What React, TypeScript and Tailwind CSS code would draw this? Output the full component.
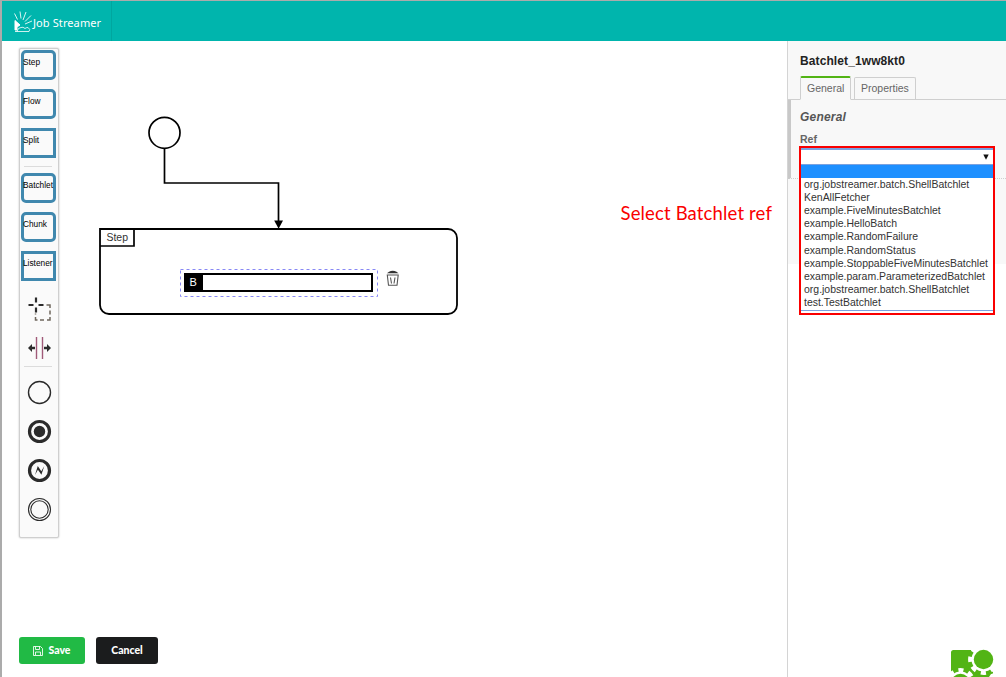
import React from "react";

const refs = [
  "org.jobstreamer.batch.ShellBatchlet",
  "KenAllFetcher",
  "example.FiveMinutesBatchlet",
  "example.HelloBatch",
  "example.RandomFailure",
  "example.RandomStatus",
  "example.StoppableFiveMinutesBatchlet",
  "example.param.ParameterizedBatchlet",
  "org.jobstreamer.batch.ShellBatchlet",
  "test.TestBatchlet",
];

function Entry({ label, square }: { label: string; square?: boolean }) {
  return (
    <div className="h-[39px] pt-px pl-px">
      <div
        className={
          "h-[30px] w-[35px] border-[3px] border-[#4088ae] pt-[3px] font-['Liberation_Sans',sans-serif] text-[8.300px] leading-[12px] whitespace-nowrap text-black " +
          (square ? "rounded-none" : "rounded-[5px]")
        }
      >
        <span className="-ml-px block">{label}</span>
      </div>
    </div>
  );
}

function Tool({ children }: { children: React.ReactNode }) {
  return (
    <svg className="block" width="39" height="39" viewBox="0 0 39 39" fill="none" stroke="#2b2b2b">
      {children}
    </svg>
  );
}

function Divider() {
  return <div className="mr-[6px] mb-[5px] ml-[4px] h-px bg-[#dcdcdc]" />;
}

function Palette() {
  return (
    <div className="mt-[7px] ml-[17px] h-[490px] w-[40px] rounded-[2px] border border-[#cfcfcf] bg-[#fafafa] shadow-[0_0_2px_0_#bbb]">
      <Entry label="Step" />
      <Entry label="Flow" />
      <Entry label="Split" square />
      <Divider />
      <Entry label="Batchlet" />
      <Entry label="Chunk" />
      <Entry label="Listener" square />
      <Tool>
        <path d="M16 8.500v5M16 18.500v5M8.500 16h5M18.500 16h5" strokeWidth="2.200" />
        <path d="M26.500 16h3.500v3M30 21.500v4M30 28v3h-3M24 31h-4M17.500 31h-2v-3M15.500 25.500v-1" stroke="#6f675d" strokeWidth="1.500" />
      </Tool>
      <Tool>
        <path d="M16.500 9v22" stroke="#a05a78" strokeWidth="1.400" />
        <path d="M22.500 9v22" stroke="#a05a78" strokeWidth="1.400" />
        <path d="M8 20l4-4v2.700h3v2.600h-3v2.700zM31 20l-4-4v2.700h-3v2.600h3v2.700z" fill="#2b2b2b" stroke="none" />
      </Tool>
      <div className="-mt-px"><Divider /></div>
      <Tool><circle cx="19.500" cy="20.500" r="11" strokeWidth="1.400" /></Tool>
      <Tool>
        <circle cx="19.500" cy="20.500" r="10" strokeWidth="3.200" />
        <circle cx="19.500" cy="20.500" r="5.700" fill="#2b2b2b" stroke="none" />
      </Tool>
      <Tool>
        <circle cx="19.500" cy="20.500" r="10" strokeWidth="3.200" />
        <path d="M15 25l2.800-9 3.500 5.300 3-5.300-2.900 8.700-3.500-5z" fill="#2b2b2b" stroke="none" />
      </Tool>
      <Tool>
        <circle cx="19.500" cy="20.500" r="11" strokeWidth="1.100" />
        <circle cx="19.500" cy="20.500" r="8.700" strokeWidth="1.100" />
      </Tool>
    </div>
  );
}

function Diagram() {
  return (
    <svg className="absolute top-[59px] left-[88px]" width="380" height="225" viewBox="90 100 380 225" fill="none" stroke="#000">
      <circle cx="164.500" cy="132.800" r="15.500" strokeWidth="1.700" />
      <path d="M164.500 148v35h114V223" strokeWidth="1.700" />
      <path d="M274.200 220.500h8.800l-4.400 8.200z" fill="#000" stroke="none" />
      <path d="M100 229h348a9 9 0 0 1 9 9v67a9 9 0 0 1-9 9H109a9 9 0 0 1-9-9z" strokeWidth="1.800" />
      <path d="M100 246h34v-17" strokeWidth="1.700" />
      <text x="106.500" y="241" fontFamily="Liberation Sans, sans-serif" fontSize="10.500" textLength="21.500" fill="#333" stroke="none">Step</text>
      <rect x="180.500" y="269.500" width="197" height="27" stroke="#8888f5" strokeDasharray="3 3" />
      <rect x="185" y="274" width="187" height="17" strokeWidth="2" />
      <rect x="184" y="273" width="19" height="19" fill="#000" stroke="none" />
      <text x="189.500" y="286" fontFamily="Liberation Sans, sans-serif" fontSize="11" fill="#fff" stroke="none">B</text>
      <path d="M387 273.300h11.500l-2-1.500q-3.700-2.200-7.500 0z" fill="#333" stroke="none" />
      <path d="M387.300 275h10.900l-1.200 10.300h-8.500zM390.500 277.500l1 6M395 277.500l-1 6" stroke="#555" strokeWidth="1.100" />
    </svg>
  );
}

function Dropdown() {
  return (
    <div className="absolute top-[105px] left-[11px] h-[169px] w-[196px] border-2 border-[#fa0000] bg-white">
      <div className="flex h-[17px] items-center justify-end border-t-2 border-b border-[#7ba2df] pr-[4px]">
        <svg width="6" height="6" viewBox="0 0 6 6"><path d="M.3.500h5.400L3 5.800z" fill="#111" /></svg>
      </div>
      <div className="h-[13px] bg-[#1e90ff]" />
      <div className="h-[133px] border-b border-[#7ba2df] pl-[3px] font-['Liberation_Sans',sans-serif] text-[10.480px] text-[#333]">
        {refs.map((name, i) => (
          <div key={i} className="h-[13.120px] leading-[14px] whitespace-nowrap">{name}</div>
        ))}
      </div>
    </div>
  );
}

function Properties() {
  return (
    <aside className="relative w-[219px] border-l border-[#d4d4d4] bg-white font-['Liberation_Sans',sans-serif]">
      <div className="h-[223px] bg-[#f8f8f8]">
        <div className="flex h-[59px] flex-col justify-between border-b border-[#cfcfcf] pl-[12px]">
          <div className="pt-[12px] text-[12px] leading-[16px] font-bold tracking-[0.100px] text-[#222]">Batchlet_1ww8kt0</div>
          <div className="flex items-end gap-[3px] text-[10.500px] text-[#666]">
            <div className="-mb-px h-[24px] w-[51px] rounded-t-[2px] border border-t-2 border-[#cfcfcf] border-t-[#52b415] border-b-[#f8f8f8] bg-[#f8f8f8] pl-[6px] leading-[21px]">General</div>
            <div className="h-[22px] w-[62px] rounded-t-[2px] border border-b-0 border-[#cfcfcf] pl-[6px] leading-[21px]">Properties</div>
          </div>
        </div>
        <div className="h-[79px] border-b border-l-[3px] border-dotted border-b-[#cfcfcf] border-l-[#c8c8c8] [border-left-style:solid] pt-[9px] pl-[9px]">
          <div className="text-[12px] leading-[16px] font-bold tracking-[0.200px] text-[#555] italic">General</div>
          <div className="mt-[7px] text-[10.500px] leading-[14px] font-bold text-[#666]">Ref</div>
        </div>
      </div>
      <Dropdown />
      <svg className="absolute right-[12px] bottom-0" width="44" height="28" viewBox="0 0 44 28">
        <path d="M3.500 1H24v14h19v9q0 1-2 1l-2 3H1V3.500Q1 1 3.500 1z" fill="#52b415" />
        <circle cx="33.500" cy="10.500" r="12" fill="#fff" />
        <circle cx="33.500" cy="10.500" r="13.200" fill="none" stroke="#fff" strokeWidth="4.400" strokeDasharray="5.180 5.187" strokeDashoffset="2.600" />
        <circle cx="33.500" cy="10.500" r="9.700" fill="#52b415" />
        <circle cx="10.500" cy="34" r="11.500" fill="#fff" />
        <circle cx="10.500" cy="34" r="13" fill="none" stroke="#fff" strokeWidth="4" strokeDasharray="5.100 5.110" strokeDashoffset="2.500" />
        <circle cx="10.500" cy="34" r="9.300" fill="#52b415" />
      </svg>
    </aside>
  );
}

export default function App() {
  return (
    <div className="flex h-[677px] w-[1006px] flex-col overflow-hidden border-t border-l-2 border-[#ababab] bg-white">
      <header className="flex h-[40px] bg-[#00b5ad]">
        <div className="flex w-[110px] items-center border-r border-[#00a69f] pt-[3px] pl-[11px] text-white">
          <svg className="-mt-px" width="20" height="24" viewBox="0 0 20 24" fill="none" stroke="#fff" strokeWidth="1">
            <path d="M1.500 3.500l3 6M7 1.500l1 7M13 2l-3 8M18 5.500l-6 6M19 11l-7 3" strokeOpacity=".85" />
            <path d="M2 10.500l5 4.500-3 2v3H2z" fill="#fff" />
            <path d="M2 21.500h14q2-2-1-4-2 0-3 1-2-2-4-1-3 0-4 4" strokeOpacity=".8" />
          </svg>
          <span className="font-['Noto_Sans',sans-serif] text-[11px] leading-[16px] tracking-[0.100px] whitespace-nowrap">Job Streamer</span>
        </div>
      </header>
      <div className="flex min-h-0 flex-1">
        <main className="relative flex flex-1 flex-col justify-between">
          <Palette />
          <Diagram />
          <div className="absolute top-[159px] left-[618.500px] font-['Lato'] text-[18.500px] leading-[26px] tracking-[0.150px] whitespace-nowrap text-[#fa0000]">Select Batchlet ref</div>
          <div className="mb-[13px] ml-[17px] flex gap-[11px] font-['Lato'] text-[10.500px] font-black text-white">
            <button className="flex h-[27px] w-[66px] items-center justify-center gap-[5px] rounded-[3px] bg-[#21ba45]">
              <svg width="10" height="10" viewBox="0 0 10 10" fill="none" stroke="#fff" strokeOpacity=".85">
                <path d="M.5.5h7l2 2v7h-9zM2.500.5v3h4v-3M2.500 9V6h5v3" />
              </svg>
              Save
            </button>
            <button className="h-[27px] w-[62px] rounded-[3px] bg-[#1b1c1d]">Cancel</button>
          </div>
        </main>
        <Properties />
      </div>
    </div>
  );
}
